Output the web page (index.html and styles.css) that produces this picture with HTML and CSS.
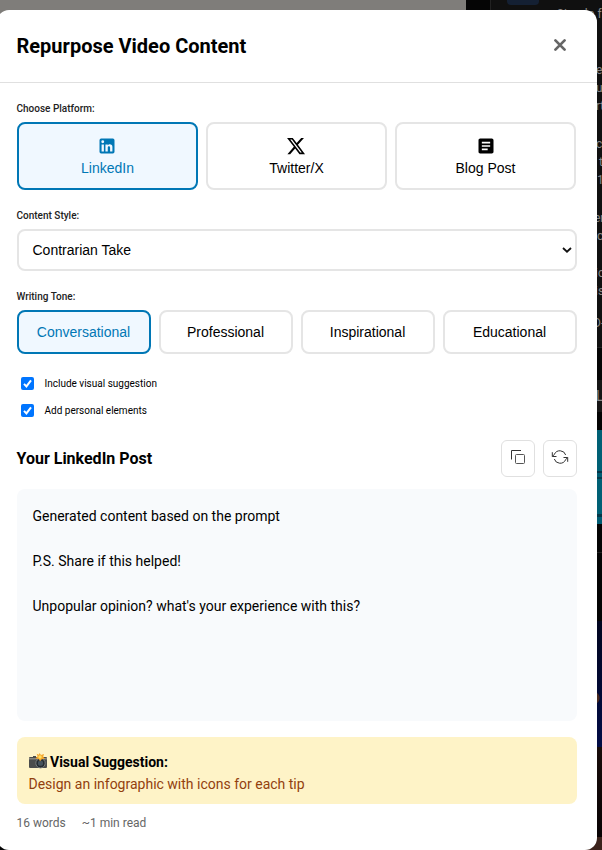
FILE: index.html
```html
<!DOCTYPE html>
<html lang="en">
<head>
<meta charset="utf-8">
<title>Repurpose Video Content</title>
<link rel="stylesheet" href="styles.css">
</head>
<body>
<div class="backdrop">
  <div class="page-main"></div>
  <div class="gutter"></div>
  <div class="side">
    <div class="side-top"><span class="chip"></span><span class="side-title">Simple f</span></div>
    <div class="side-text">
      <p>e<br>u<br>rt</p>
      <p>c<br>&nbsp;t<br><span class="numeral">1</span></p>
      <p>er<br>&nbsp;c</p>
      <p>ic<br>is</p>
      <p class="last">D-</p>
    </div>
    <div class="side-gap"></div>
    <div class="side-label">L</div>
    <div class="side-space"></div>
    <div class="thumb-teal"></div>
    <div class="side-dark"></div>
    <div class="thumb-navy"></div>
    <div class="thumb-brown"></div>
    <div class="thumb-skin"></div>
  </div>
</div>
<div class="modal">
  <header class="modal-header">
    <h2>Repurpose Video Content</h2>
    <button class="close" aria-label="Close"><svg width="14" height="14" viewBox="0 0 14 14"><path d="M2.400 2.400 11.600 11.600M11.600 2.400 2.400 11.600" stroke="#666" stroke-width="2.700" stroke-linecap="round"/></svg></button>
  </header>
  <main class="modal-body">
    <div class="label">Choose Platform:</div>
    <div class="platforms">
      <button class="option platform active">
        <svg width="20" height="20" viewBox="0 0 24 24" fill="currentColor"><path d="M19 3a2 2 0 0 1 2 2v14a2 2 0 0 1-2 2H5a2 2 0 0 1-2-2V5a2 2 0 0 1 2-2h14m-.5 15.500v-5.300a3.260 3.260 0 0 0-3.260-3.260c-.85 0-1.840.52-2.320 1.300v-1.110h-2.790v8.370h2.790v-4.930c0-.77.62-1.400 1.390-1.400a1.400 1.400 0 0 1 1.400 1.400v4.930h2.790M6.880 8.560a1.680 1.680 0 0 0 1.680-1.680c0-.93-.75-1.690-1.680-1.690a1.690 1.690 0 0 0-1.690 1.690c0 .93.76 1.680 1.690 1.680m1.390 9.940v-8.370H5.500v8.370h2.770z"/></svg>
        <span>LinkedIn</span>
      </button>
      <button class="option platform">
        <svg width="20" height="20" viewBox="0 0 24 24" fill="currentColor"><path d="M18.244 2.250h3.308l-7.227 8.260 8.502 11.240H16.170l-5.214-6.817L4.990 21.750H1.680l7.730-8.835L1.254 2.250H8.080l4.713 6.231zm-1.161 17.520h1.833L7.084 4.126H5.117z"/></svg>
        <span>Twitter/X</span>
      </button>
      <button class="option platform blog">
        <svg width="20" height="20" viewBox="0 0 24 24" fill="currentColor"><path d="M19 3H5c-1.100 0-2 .9-2 2v14c0 1.100.9 2 2 2h14c1.100 0 2-.9 2-2V5c0-1.100-.9-2-2-2zm-5 14H7v-2h7v2zm3-4H7v-2h10v2zm0-4H7V7h10v2z"/></svg>
        <span>Blog Post</span>
      </button>
    </div>
    <div class="label label-style">Content Style:</div>
    <div class="select" role="combobox"><span>Contrarian Take</span><svg width="10" height="6" viewBox="0 0 10 6"><path d="M1 1l4 3.700L9 1" fill="none" stroke="#111" stroke-width="1.800"/></svg></div>
    <div class="label label-tone">Writing Tone:</div>
    <div class="tones">
      <button class="option active">Conversational</button>
      <button class="option">Professional</button>
      <button class="option">Inspirational</button>
      <button class="option">Educational</button>
    </div>
    <div class="checks">
      <div class="check"><span class="box"><svg width="13" height="13" viewBox="0 0 13 13"><path d="M3 6.900 5.400 9.400 10 3.300" fill="none" stroke="#fff" stroke-width="2"/></svg></span><span class="check-text">Include visual suggestion</span></div>
      <div class="check"><span class="box"><svg width="13" height="13" viewBox="0 0 13 13"><path d="M3 6.900 5.400 9.400 10 3.300" fill="none" stroke="#fff" stroke-width="2"/></svg></span><span class="check-text">Add personal elements</span></div>
    </div>
    <div class="result-header">
      <h3>Your LinkedIn Post</h3>
      <div class="actions">
        <button class="icon-btn" aria-label="Copy"><svg width="16" height="16" viewBox="0 0 16 16" fill="none" stroke="#333"><path d="M1.500 10.500v-9h9.500"/><rect x="5.500" y="5.500" width="9" height="9" rx="1" stroke="#555"/></svg></button>
        <button class="icon-btn" aria-label="Regenerate"><svg width="18" height="16" viewBox="0 0 18 16" fill="none" stroke="#333"><path d="M3.400 5.200A6.100 6.100 0 0 1 14.700 6M14.600 10.800A6.100 6.100 0 0 1 3.300 10"/><path d="M1.300 3.200V7.500H5.500M12.500 8.500H16.700V12.800M1.500 7.300 3.500 5.200M16.500 8.700 14.500 10.800"/></svg></button>
      </div>
    </div>
    <div class="post">Generated content based on the prompt<br><br>P.S. Share if this helped!<br><br>Unpopular opinion? what's your experience with this?</div>
    <div class="suggestion">
      <div class="suggestion-title"><svg class="camera" width="18" height="17" viewBox="0 0 18 17"><path d="M1 4h3V3h3v1h10q1 0 1 1v9q0 1-1 1H1q-1 0-1-1V5q0-1 1-1z" fill="#4b4c4c"/><path d="M0 5h18v1.500H0z" fill="#858580"/><circle cx="11.500" cy="10.200" r="4.700" fill="#252b30" stroke="#777b7c"/><circle cx="11.500" cy="10.200" r="2.600" fill="#45515b"/><path d="M10.500 0 12 2.100 15 1l-.8 2.700L16 6l-3 .1-2 2.200-1.200-2.400L6.500 5.500 8.600 3.300 7.700.8l2.200.9z" fill="#f4a52b"/><circle cx="11" cy="4" r="1.700" fill="#ffdf62"/></svg><strong>Visual Suggestion:</strong></div>
      <div class="suggestion-text">Design an infographic with icons for each tip</div>
    </div>
    <div class="stats"><span>16 words</span><span>~1 min read</span></div>
  </main>
</div>
</body>
</html>
```
FILE: styles.css
```css
* { box-sizing: border-box; }
body { margin: 0; width: 602px; height: 850px; overflow: hidden; position: relative; background: #050505; font-family: Roboto, sans-serif; color: #000; }
h2, h3, p { margin: 0; }
button { font: inherit; padding: 0; margin: 0; color: inherit; }
svg { display: block; flex: none; }

.backdrop { display: flex; width: 602px; height: 850px; overflow: hidden; }
.page-main { width: 466px; height: 840px; background: #7f7d7a; }
.gutter { width: 25px; background: #050505; border-right: 1px solid #222; }
.side { width: 111px; overflow: hidden; background: #101010; color: #888; font-size: 12px; white-space: nowrap; }
.side-top { display: flex; height: 61px; padding-left: 16px; }
.chip { width: 34px; height: 5px; background: #142033; border-radius: 0 0 4px 4px; }
.side-title { margin: 6px 0 0 17px; font-size: 12px; line-height: 16px; }
.side-text { height: 286px; padding-left: 105px; line-height: 18px; }
.side-text p { margin-bottom: 20px; }
.side-text p:nth-child(3) { margin-bottom: 19px; margin-left: -2px; }
.side-text p:nth-child(4) { margin-bottom: 14px; margin-left: -1px; }
.side-text .last { margin-left: -3px; }
.numeral { margin-left: 1px; }
.side-gap { height: 33px; background: #050505; border-top: 1px solid #222; }
.side-label { height: 32px; padding-left: 105px; background: #161616; line-height: 32px; font-size: 14px; }
.side-space { height: 18px; background: #030303; }
.thumb-teal { height: 94px; background: linear-gradient(#006075 0 41px, #033448 41px 43px, #005c72 43px 47px, #053c4d 47px 49px, #006075 49px 84px, #043748 84px 87px, #005c72 87px); }
.side-dark { height: 97px; background: linear-gradient(#040404 0 28px, #202020 28px 29px, #040404 29px); }
.thumb-navy { height: 126px; background: radial-gradient(circle at 102px 77px, #49291f 0 6px, transparent 7px), linear-gradient(#01051f, #020c46); }
.thumb-brown { height: 90px; background: linear-gradient(#180c0a, #080304); }
.thumb-skin { height: 13px; background: #3b221b; }

.side-title { margin-left: 18px; letter-spacing: .2px; }

.modal { position: absolute; left: -3px; top: 10px; width: 600px; height: 840px; background: #fff; border-radius: 12px; }
.modal-header { display: flex; height: 73px; padding: 0 30px 0 19.500px; align-items: center; justify-content: space-between; border-bottom: 1px solid #e0e0e0; }
h2 { font-size: 20px; line-height: 24px; font-weight: 700; }
.close { border: 0; background: none; padding-bottom: 2px; }
.modal-body { padding: 19px 20px 0; }
.label { height: 14px; font-size: 10px; line-height: 14px; font-weight: 500; color: #222; text-indent: -.5px; }
.option { display: flex; align-items: center; justify-content: center; border: 2px solid #e5e5e5; border-radius: 8px; background: #fff; font-family: "Liberation Sans", Arial, sans-serif; font-size: 14px; }
.option.active { border-color: #0077b5; color: #0077b5; background: #f0f8ff; }
.platforms { display: grid; grid-template-columns: repeat(3, 181px); gap: 8px; margin-top: 6px; }
.platform { height: 68px; flex-direction: column; gap: 4px; line-height: 17px; }
.platform svg { margin-right: 1px; }
.platform.blog svg { margin-right: 0; }
.label-style { margin-top: 19px; }
.select { display: flex; justify-content: space-between; align-items: center; height: 42px; margin-top: 6px; padding: 0 3px 0 13.500px; border: 2px solid #e5e5e5; border-radius: 8px; font: 14px "Liberation Sans", Arial, sans-serif; }
.label-tone { margin-top: 19px; }
.tones { display: grid; grid-template-columns: repeat(4, 1fr); gap: 8px; margin-top: 6px; }
.tones .option { height: 44px; padding-right: 1px; }
.checks { display: grid; gap: 13px; margin: 22px 0 0 4px; }
.check { display: flex; align-items: center; gap: 10.500px; height: 14px; font-size: 10px; line-height: 14px; }
.check-text { padding-top: 2px; }
.box { width: 13px; height: 13px; border-radius: 2px; background: #0075ff; }
.result-header { display: flex; justify-content: space-between; align-items: center; height: 37px; margin-top: 23px; }
h3 { font-size: 16px; line-height: 20px; font-weight: 700; text-indent: -.5px; }
.actions { display: flex; gap: 8px; }
.icon-btn { display: flex; justify-content: center; align-items: center; width: 34px; height: 37px; padding-bottom: 3px; border: 1px solid #e0e0e0; border-radius: 6px; background: #fff; }
.post { height: 232px; margin-top: 12px; padding: 16px 15.500px; border-radius: 8px; background: #f8fafc; font-size: 14px; line-height: 22.400px; }
.suggestion { height: 67px; margin-top: 16px; padding: 14px 11.500px 0; border-radius: 8px; background: #fef3c7; font-size: 14px; line-height: 22px; }
.suggestion-title { display: flex; align-items: center; gap: 3.500px; }
.camera { margin-top: -2px; }
.suggestion-text { color: #92400e; }
.stats { display: flex; gap: 16px; margin: 12px 0 0 -.5px; font-size: 12px; line-height: 14px; color: #666; }
```
